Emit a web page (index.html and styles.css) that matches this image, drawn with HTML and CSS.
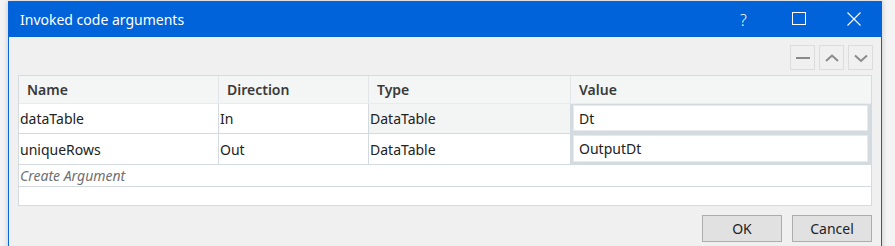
FILE: index.html
```html
<!DOCTYPE html>
<html lang="en">
<head>
    <meta charset="UTF-8">
    <title>Invoked code arguments</title>
    <link rel="stylesheet" href="styles.css">
</head>
<body>
    <div class="window">
        <div class="titlebar">
            <span class="title">Invoked code arguments</span>
            <div class="caption-buttons">
                <span class="cap help">?</span>
                <span class="cap">
                    <svg width="14" height="14" viewBox="0 0 14 14"><rect x="0.5" y="0.5" width="13" height="12" fill="none" stroke="#fff" stroke-width="1"/></svg>
                </span>
                <span class="cap">
                    <svg width="14" height="14" viewBox="0 0 14 14"><path d="M0.5 0.5 L13.5 13.5 M13.5 0.5 L0.5 13.5" stroke="#fff" stroke-width="1.1"/></svg>
                </span>
            </div>
        </div>

        <div class="content">
            <div class="toolbar">
                <button class="tool">
                    <svg width="14" height="14" viewBox="0 0 14 14"><path d="M0 7 H14" stroke="#8a8a8a" stroke-width="2"/></svg>
                </button>
                <button class="tool">
                    <svg width="14" height="14" viewBox="0 0 14 14"><path d="M1 10 L7 4.5 L13 10" fill="none" stroke="#8a8a8a" stroke-width="2"/></svg>
                </button>
                <button class="tool">
                    <svg width="14" height="14" viewBox="0 0 14 14"><path d="M1 4.5 L7 10 L13 4.5" fill="none" stroke="#8a8a8a" stroke-width="2"/></svg>
                </button>
            </div>

            <div class="grid">
                <div class="row head">
                    <div class="cell">Name</div>
                    <div class="cell">Direction</div>
                    <div class="cell">Type</div>
                    <div class="cell">Value</div>
                </div>
                <div class="row item">
                    <div class="cell">dataTable</div>
                    <div class="cell">In</div>
                    <div class="cell hover">DataTable</div>
                    <div class="cell value"><div class="input">Dt</div></div>
                </div>
                <div class="row item second">
                    <div class="cell">uniqueRows</div>
                    <div class="cell">Out</div>
                    <div class="cell">DataTable</div>
                    <div class="cell value"><div class="input">OutputDt</div></div>
                </div>
                <div class="create">Create Argument</div>
                <div class="blank"></div>
            </div>

            <div class="footer">
                <button class="btn">OK</button>
                <button class="btn">Cancel</button>
            </div>
        </div>
    </div>
</body>
</html>
```

FILE: styles.css
```css
* {
    box-sizing: border-box;
}

body {
    margin: 0;
    padding-top: 1px;
    background-color: #f4f4f4;
    font-family: 'Noto Sans', 'Open Sans', sans-serif;
    font-size: 14px;
    color: #222;
}

.window {
    margin-left: 8px;
    width: 874px;
    height: 250px;
    border: 1px solid #0a63d6;
    border-bottom: none;
    background-color: #f0f0f0;
    box-shadow: 0 0 6px rgba(0, 0, 0, 0.2);
}

.titlebar {
    height: 35px;
    background-color: #0063da;
    color: #fff;
    display: flex;
    align-items: center;
    justify-content: space-between;
    padding-left: 11px;
}

.title {
    font-size: 14px;
    margin-top: -1px;
}

.caption-buttons {
    display: flex;
    align-items: center;
    height: 100%;
}

.cap {
    width: 55px;
    height: 100%;
    display: flex;
    align-items: center;
    justify-content: center;
}

.cap svg {
    margin-top: -1px;
}

.help {
    font-size: 16px;
    font-weight: 300;
}

.content {
    padding: 8px 8px 0 9px;
}

.toolbar {
    display: flex;
    justify-content: flex-end;
    gap: 4px;
    height: 26px;
}

.tool {
    width: 25px;
    height: 25px;
    padding: 0;
    border: 1px solid #dcdcdc;
    background-color: #f0f0f0;
    display: flex;
    align-items: center;
    justify-content: center;
}

.grid {
    margin-top: 4px;
    margin-right: 1px;
    border: 1px solid #d3dbe0;
    background-color: #fff;
}

.row {
    display: grid;
    grid-template-columns: 200px 150px 202px 1fr;
}

.cell {
    border-right: 1px solid #d3dbe0;
    display: flex;
    align-items: center;
    padding-left: 1px;
    white-space: nowrap;
}

.cell:last-child {
    border-right: none;
}

.head {
    height: 28px;
    background-color: #f4f5f5;
    border-bottom: 1px solid #e8ecee;
    color: #3a3a3a;
    font-weight: 600;
}

.head .cell {
    padding-left: 8px;
    border-right-color: #e2e6e9;
}

.item {
    height: 30px;
    border-bottom: 1px solid #d3dbe0;
}

.item.second {
    height: 31px;
}

.hover {
    background-color: #f3f4f4;
}

.value {
    background-color: #d3dbe0;
    padding: 1px 3px 2px 2px;
    align-items: stretch;
}

.input {
    flex: 1;
    background-color: #fff;
    border: 1px solid #e6eaed;
    display: flex;
    align-items: center;
    padding-left: 5px;
}

.create {
    height: 22px;
    border-bottom: 1px solid #d3dbe0;
    color: #707070;
    font-style: italic;
    padding-left: 1px;
    display: flex;
    align-items: center;
}

.blank {
    height: 18px;
}

.footer {
    display: flex;
    justify-content: flex-end;
    gap: 10px;
    margin-top: 9px;
    margin-right: 1px;
}

.btn {
    width: 80px;
    height: 27px;
    border: 1px solid #adadad;
    background-color: #e1e1e1;
    font-family: inherit;
    font-size: 14px;
    color: #222;
    padding: 0;
}
```
